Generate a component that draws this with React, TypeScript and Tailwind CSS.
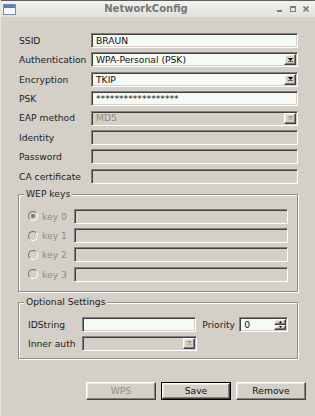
import React from "react";

const sunken =
  "border border-t-[#808080] border-l-[#808080] border-b-white border-r-white shadow-[inset_1px_1px_0_#404040,inset_-1px_-1px_0_#d4d0c8]";
const raised =
  "border border-t-white border-l-white border-b-[#404040] border-r-[#404040] shadow-[inset_-1px_-1px_0_#808080,inset_1px_1px_0_#ece9e2]";

function Field({
  value,
  disabled,
  className = "",
}: {
  value?: string;
  disabled?: boolean;
  className?: string;
}) {
  return (
    <div
      className={`h-[15px] ${sunken} ${
        disabled ? "bg-[#d4d0c8]" : "bg-[#f6faf4]"
      } flex items-center pl-[4px] ${className}`}
    >
      <span className={`leading-none whitespace-nowrap ${disabled ? "text-[#8a8e86]" : "text-[#111]"}`}>
        {value}
      </span>
    </div>
  );
}

function Arrow({ disabled }: { disabled?: boolean }) {
  return (
    <svg width="5" height="4" viewBox="0 0 5 4">
      <path d="M0 0 H5 L2.5 3 Z" fill={disabled ? "#a0a09a" : "#000"} />
      <rect x="0" y="3.2" width="5" height="0.8" fill={disabled ? "#b0b0aa" : "#444"} />
    </svg>
  );
}

function Combo({
  value,
  disabled,
  className = "",
}: {
  value?: string;
  disabled?: boolean;
  className?: string;
}) {
  return (
    <div
      className={`h-[15px] ${sunken} ${
        disabled ? "bg-[#d4d0c8]" : "bg-[#f6faf4]"
      } flex items-center pl-[4px] ${className}`}
    >
      <span
        className={`flex-1 leading-none whitespace-nowrap ${
          disabled ? "text-[#8a8e86]" : "text-[#111]"
        }`}
      >
        {value}
      </span>
      <div
        className={`w-[12px] h-[11px] mr-[1px] ${raised} bg-[#d4d0c8] flex items-center justify-center`}
      >
        <Arrow disabled={disabled} />
      </div>
    </div>
  );
}

function Radio({ checked }: { checked?: boolean }) {
  return (
    <div className="w-[10px] h-[10px] rounded-full border border-t-[#707070] border-l-[#707070] border-b-white border-r-white bg-[#d4d0c8] flex items-center justify-center">
      {checked && <div className="w-[4px] h-[4px] rounded-full bg-[#7a7a76]" />}
    </div>
  );
}

function Group({
  title,
  children,
  className = "",
}: {
  title: string;
  children: React.ReactNode;
  className?: string;
}) {
  return (
    <div
      className={`relative border border-[#8f8d87] shadow-[inset_1px_1px_0_#fff,1px_1px_0_#fff] ${className}`}
    >
      <span className="absolute -top-[7px] left-[5px] bg-[#d4d0c8] px-[2px] leading-[12px] text-[#222]">
        {title}
      </span>
      {children}
    </div>
  );
}

function PushButton({
  label,
  disabled,
  isDefault,
}: {
  label: string;
  disabled?: boolean;
  isDefault?: boolean;
}) {
  return (
    <div className={`w-[70px] h-[18px] flex ${isDefault ? "border border-black" : ""}`}>
      <div
        className={`flex-1 self-stretch ${raised} bg-[#d4d0c8] flex items-center justify-center ${
          disabled ? "text-[#8a8e86]" : "text-[#111]"
        }`}
      >
        {label}
      </div>
    </div>
  );
}

export default function App() {
  const rows: { label: string; el: React.ReactNode }[] = [
    { label: "SSID", el: <Field value="BRAUN" /> },
    { label: "Authentication", el: <Combo value="WPA-Personal (PSK)" /> },
    { label: "Encryption", el: <Combo value="TKIP" /> },
    { label: "PSK", el: <Field value="******************" /> },
    { label: "EAP method", el: <Combo value="MD5" disabled /> },
    { label: "Identity", el: <Field disabled /> },
    { label: "Password", el: <Field disabled /> },
    { label: "CA certificate", el: <Field disabled /> },
  ];

  return (
    <div className="w-[315px] h-[416px] bg-[#d4d0c8] flex flex-col overflow-hidden font-['DejaVu_Sans',sans-serif] text-[9.2px] text-[#222] border-l border-[#e2e6dc]">
      {/* Title bar */}
      <div className="h-[17px] shrink-0 flex items-center border-t border-[#5c5c5c] bg-gradient-to-b from-[#f2f3ee] to-[#e0e1da]">
        <div className="w-[16px] flex justify-center pl-[1px]">
          <svg width="13" height="11" viewBox="0 0 13 11">
            <rect x="0.5" y="0.5" width="12" height="10" fill="#f4f6fa" stroke="#7d8ca8" />
            <rect x="1" y="1" width="11" height="3" fill="#5b80c2" />
          </svg>
        </div>
        <div className="flex-1 text-center font-bold text-[10px] text-[#777] leading-none">
          NetworkConfig
        </div>
        <div className="w-[40px] flex items-center justify-end gap-[7px] pr-[6px]">
          <svg width="6" height="6" viewBox="0 0 6 6">
            <rect x="0" y="4" width="5" height="2" fill="#7c7c7c" />
          </svg>
          <svg width="6" height="6" viewBox="0 0 6 6">
            <rect x="0.5" y="0.5" width="5" height="5" fill="none" stroke="#7c7c7c" />
            <rect x="0.5" y="0.5" width="5" height="1.5" fill="#7c7c7c" />
          </svg>
          <svg width="6" height="6" viewBox="0 0 6 6">
            <path d="M0.5 0.5 L5.5 5.5 M5.5 0.5 L0.5 5.5" stroke="#7c7c7c" strokeWidth="1.6" />
          </svg>
        </div>
      </div>

      {/* Content */}
      <div className="flex-1 flex flex-col px-[17px] pt-[16px]">
        <div className="grid grid-cols-[73px_1fr] gap-y-[4.4px] items-center">
          {rows.map((r) => (
            <React.Fragment key={r.label}>
              <div className="pl-[1px] leading-none whitespace-nowrap">{r.label}</div>
              {r.el}
            </React.Fragment>
          ))}
        </div>

        <Group title="WEP keys" className="mt-[10px] pt-[14px] pb-[9px] pl-[9px] pr-[9px]">
          <div className="flex flex-col gap-[4.3px]">
            {[0, 1, 2, 3].map((i) => (
              <div key={i} className="flex items-center h-[15px]">
                <Radio checked={i === 0} />
                <span className="w-[36px] pl-[4px] text-[#8a8e86] leading-none">key {i}</span>
                <Field disabled className="flex-1" />
              </div>
            ))}
          </div>
        </Group>

        <Group title="Optional Settings" className="mt-[10px] pt-[14px] pb-[7px] pl-[9px] pr-[9px]">
          <div className="flex flex-col gap-[4px]">
            <div className="flex items-center h-[15px]">
              <span className="w-[54px] leading-none">IDString</span>
              <Field className="w-[115px]" />
              <span className="ml-[6px] w-[37px] leading-none">Priority</span>
              <div className={`w-[49px] h-[15px] ${sunken} bg-[#f6faf4] flex items-center pl-[4px]`}>
                <span className="flex-1 leading-none text-[#111]">0</span>
                <div className="flex flex-col mr-[1px]">
                  <div className={`w-[12px] h-[6px] ${raised} bg-[#d4d0c8] flex items-center justify-center`}>
                    <svg width="3" height="2" viewBox="0 0 3 2">
                      <path d="M0 2 H3 L1.5 0 Z" fill="#000" />
                    </svg>
                  </div>
                  <div className={`w-[12px] h-[5px] ${raised} bg-[#d4d0c8] flex items-center justify-center`}>
                    <svg width="3" height="2" viewBox="0 0 3 2">
                      <path d="M0 0 H3 L1.5 2 Z" fill="#000" />
                    </svg>
                  </div>
                </div>
              </div>
            </div>
            <div className="flex items-center h-[15px]">
              <span className="w-[54px] leading-none">Inner auth</span>
              <Combo disabled className="w-[115px]" />
            </div>
          </div>
        </Group>

        <div className="mt-[23px] -mr-[8px] flex justify-end gap-[5px]">
          <PushButton label="WPS" disabled />
          <PushButton label="Save" isDefault />
          <PushButton label="Remove" />
        </div>
      </div>
    </div>
  );
}
